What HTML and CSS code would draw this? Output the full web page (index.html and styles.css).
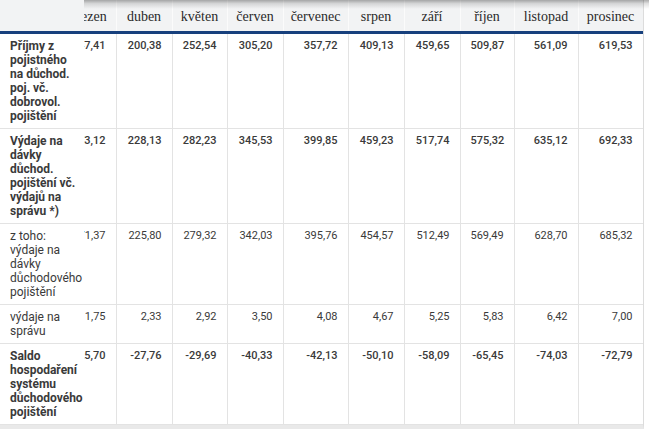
FILE: index.html
```html
<!DOCTYPE html>
<html lang="cs">
<head>
<meta charset="utf-8">
<title>Důchodové pojištění</title>
<link rel="stylesheet" href="styles.css">
</head>
<body>
<div class="page">
  <div class="scroller">
    <table class="data">
      <colgroup>
        <col class="c-label">
        <col class="c-m56">
        <col class="c-m56">
        <col class="c-m55">
        <col class="c-m56">
        <col class="c-m65">
        <col class="c-m56">
        <col class="c-m56">
        <col class="c-m54">
        <col class="c-m64">
        <col class="c-m65">
      </colgroup>
      <thead>
        <tr>
          <th class="label"></th>
          <th>březen</th>
          <th>duben</th>
          <th>květen</th>
          <th>červen</th>
          <th>červenec</th>
          <th>srpen</th>
          <th>září</th>
          <th>říjen</th>
          <th>listopad</th>
          <th>prosinec</th>
        </tr>
      </thead>
      <tbody>
        <tr class="strong">
          <th class="label">Příjmy z pojistného na důchod. poj. vč. dobrovol. pojištění</th>
          <td>147,41</td><td>200,38</td><td>252,54</td><td>305,20</td><td>357,72</td><td>409,13</td><td>459,65</td><td>509,87</td><td>561,09</td><td>619,53</td>
        </tr>
        <tr class="strong">
          <th class="label">Výdaje na dávky důchod. pojištění vč. výdajů na správu *)</th>
          <td>173,12</td><td>228,13</td><td>282,23</td><td>345,53</td><td>399,85</td><td>459,23</td><td>517,74</td><td>575,32</td><td>635,12</td><td>692,33</td>
        </tr>
        <tr>
          <th class="label">z toho: výdaje na dávky důchodového pojištění</th>
          <td>171,37</td><td>225,80</td><td>279,32</td><td>342,03</td><td>395,76</td><td>454,57</td><td>512,49</td><td>569,49</td><td>628,70</td><td>685,32</td>
        </tr>
        <tr>
          <th class="label">výdaje na správu</th>
          <td>1,75</td><td>2,33</td><td>2,92</td><td>3,50</td><td>4,08</td><td>4,67</td><td>5,25</td><td>5,83</td><td>6,42</td><td>7,00</td>
        </tr>
        <tr class="strong">
          <th class="label">Saldo hospodaření systému důchodového pojištění</th>
          <td>-25,70</td><td>-27,76</td><td>-29,69</td><td>-40,33</td><td>-42,13</td><td>-50,10</td><td>-58,09</td><td>-65,45</td><td>-74,03</td><td>-72,79</td>
        </tr>
      </tbody>
    </table>
  </div>
  <div class="shadow"></div>
</div>
</body>
</html>
```
FILE: styles.css
```css
* { box-sizing: border-box; }
html, body { margin: 0; padding: 0; background: #fff; }
body { font-family: Roboto, "Liberation Sans", Arial, sans-serif; }

.page {
  position: relative;
  width: 649px;
  height: 429px;
  overflow: hidden;
}

.scroller {
  width: 644px;
  overflow: hidden;
  border-right: 1px solid #dcdcdc;
  border-bottom: 4px solid #e9e9e9;
}

.data {
  border-collapse: collapse;
  table-layout: fixed;
  width: 667px;
  margin-left: -24px;
}

.c-label { width: 84px; }
.c-m54 { width: 54px; }
.c-m55 { width: 55px; }
.c-m56 { width: 56px; }
.c-m64 { width: 64px; }
.c-m65 { width: 65px; }

.data thead th {
  height: 32px;
  padding: 4px 0 0;
  background: #f2f3f4;
  font-family: "Liberation Serif", "Times New Roman", serif;
  font-weight: normal;
  font-size: 14px;
  color: #2a2a2a;
  text-align: center;
  border-right: 1px solid #fbfbfb;
  border-bottom: 3px solid #17407d;
  white-space: nowrap;
}

.data tbody th,
.data tbody td {
  padding: 5px 10px 5px 10px;
  font-size: 11px;
  line-height: 14px;
  vertical-align: top;
  border-right: 1px solid #e3e3e3;
  border-bottom: 1px solid #e3e3e3;
  color: #3a3a3a;
}

.data tbody td {
  text-align: right;
  white-space: nowrap;
}

.data tbody th {
  text-align: left;
  font-weight: normal;
  font-size: 12px;
  padding-right: 3px;
}

.data .label {
  position: sticky;
  left: 0;
  z-index: 2;
  background: #fff;
  border-right: 1px solid #dedede;
}

.data thead .label { background: #f2f3f4; }

.strong th { font-weight: 700 !important; color: #1e1e1e; }
.strong td { font-weight: 500; color: #222; }

.shadow {
  position: absolute;
  left: 0;
  top: 0;
  width: 100%;
  height: 9px;
  background: linear-gradient(to bottom, rgba(0,0,0,0.32), rgba(0,0,0,0.12) 40%, rgba(0,0,0,0));
  pointer-events: none;
}
```
